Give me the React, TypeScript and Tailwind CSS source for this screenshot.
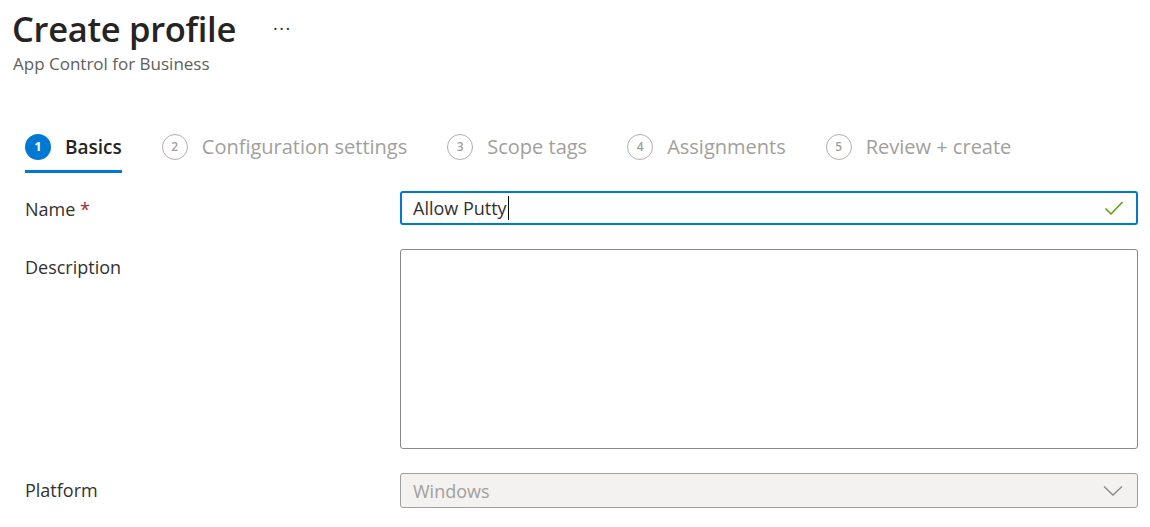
import React from "react";

const steps = [
  { n: 1, label: "Basics", active: true },
  { n: 2, label: "Configuration settings" },
  { n: 3, label: "Scope tags" },
  { n: 4, label: "Assignments" },
  { n: 5, label: "Review + create" },
];

export default function App() {
  return (
    <div
      className="w-[1150px] h-[527px] bg-white overflow-hidden text-[#323130]"
      style={{ fontFamily: '"Open Sans", "Noto Sans", sans-serif' }}
    >
      <div className="pl-[12px] pt-[7px]">
        <div className="flex items-center">
          <h1 className="text-[34.5px] leading-[44px] font-semibold tracking-[-0.3px] text-[#252423]">
            Create profile
          </h1>
          <span className="ml-[37px] text-[18px] leading-none text-[#323130] tracking-[1.5px] -mt-[2px]">
            ···
          </span>
        </div>
        <div className="text-[17px] leading-[22px] text-[#605e5c] mt-[2px] ml-[1px]">
          App Control for Business
        </div>
      </div>

      <div className="flex items-start pl-[25px] mt-[57px] gap-[40px]">
        {steps.map((s) => (
          <div key={s.n} className="flex flex-col">
            <div className="flex items-center h-[30px]">
              {s.active ? (
                <span className="w-[26px] h-[26px] rounded-full bg-[#0078d4] text-white text-[13px] font-bold flex items-center justify-center">
                  {s.n}
                </span>
              ) : (
                <span className="w-[26px] h-[26px] rounded-full border-[1.5px] border-[#b3b0ad] text-[#a19f9d] text-[12px] font-semibold flex items-center justify-center">
                  {s.n}
                </span>
              )}
              <span
                className={
                  "ml-[14px] leading-[30px] " +
                  (s.active
                    ? "text-[19px] font-semibold text-[#252423]"
                    : "text-[20px] text-[#a19f9d]")
                }
              >
                {s.label}
              </span>
            </div>
            <div
              className={
                "mt-[8px] h-[3px] " + (s.active ? "bg-[#0078d4]" : "bg-transparent")
              }
            />
          </div>
        ))}
      </div>

      <div className="pl-[25px] mt-[18px] grid grid-cols-[375px_738px] gap-y-[24px]">
        <div className="text-[18px] leading-[24px] pt-[6px]">
          Name <span className="text-[#a4262c]">*</span>
        </div>
        <div className="h-[34px] border-2 border-[#0078d4] rounded-[3px] flex items-center px-[11px]">
          <span className="text-[18px] leading-[24px] text-[#323130]">Allow Putty</span>
          <span className="w-[1px] h-[24px] bg-[#000] ml-[1px]" />
          <svg className="ml-auto mr-[1px]" width="20" height="16" viewBox="0 0 20 16">
            <path d="M1.5 8.5 L7 14 L18.5 2" fill="none" stroke="#57a300" strokeWidth="1.5" />
          </svg>
        </div>

        <div className="text-[18px] leading-[24px] pt-[6px]">Description</div>
        <div className="h-[200px] border border-[#8a8886] rounded-[3px]" />

        <div className="text-[18px] leading-[24px] pt-[5px]">Platform</div>
        <div className="h-[35px] border border-[#a19f9d] rounded-[3px] bg-[#f3f2f1] flex items-center px-[12px]">
          <span className="text-[18px] leading-[24px] text-[#a19f9d]">Windows</span>
          <svg className="ml-auto mr-[2px]" width="20" height="12" viewBox="0 0 20 12">
            <path d="M1 1.5 L10 10 L19 1.5" fill="none" stroke="#8a8886" strokeWidth="1.3" />
          </svg>
        </div>
      </div>
    </div>
  );
}
